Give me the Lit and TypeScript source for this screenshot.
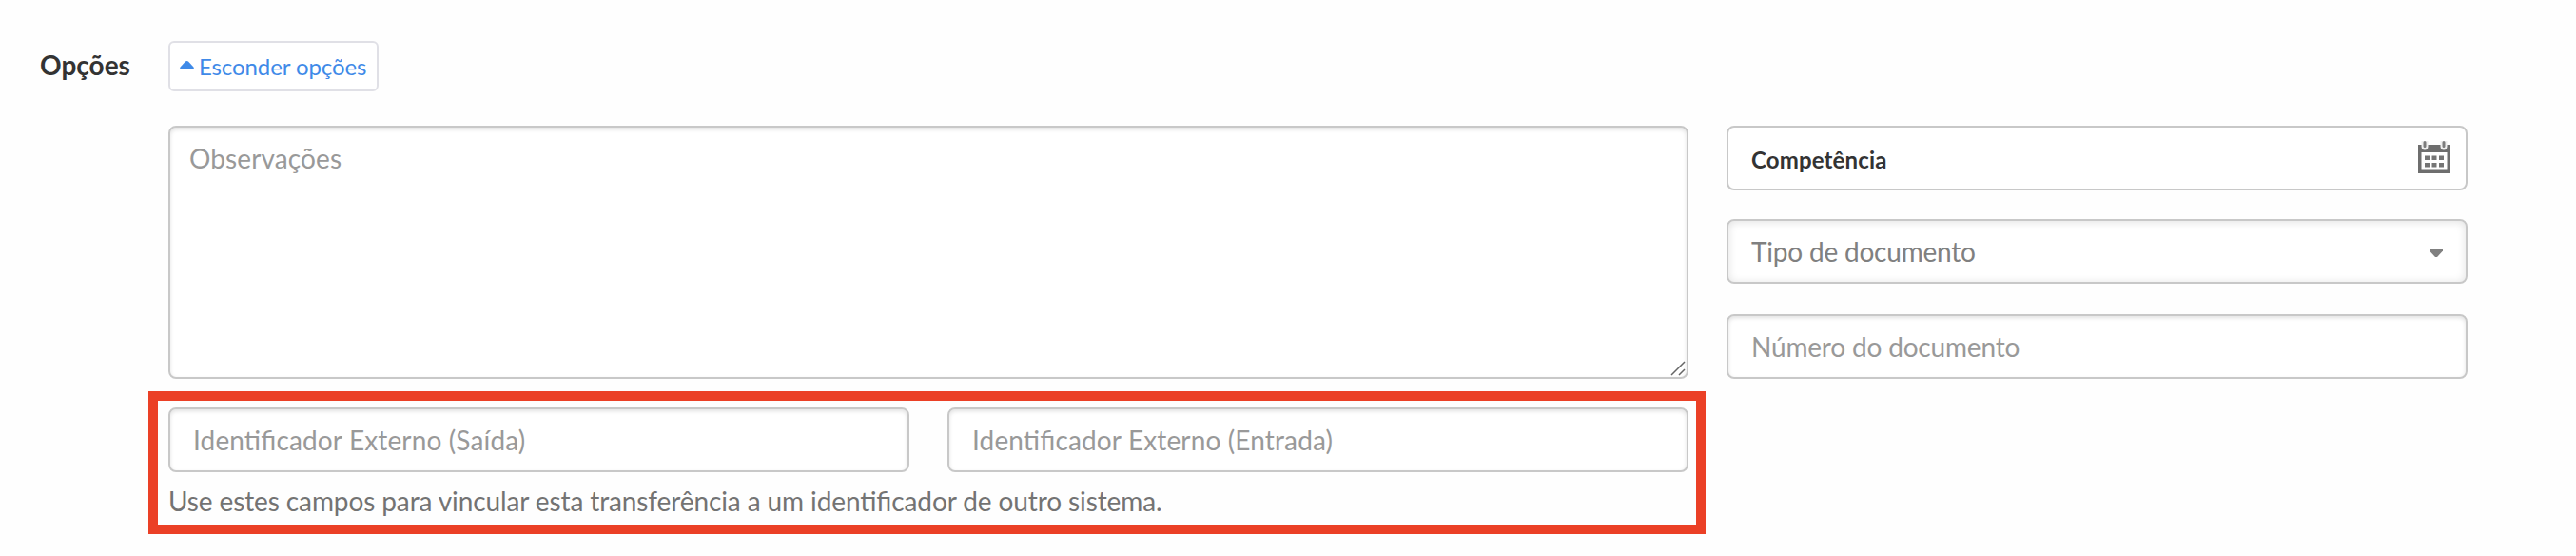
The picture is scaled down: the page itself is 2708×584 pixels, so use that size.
import { LitElement, html, css } from "lit";
import { customElement, property } from "lit/decorators.js";

@customElement("form-field")
export class FormField extends LitElement {
  @property()
  label: string = "";

  @property()
  kind: string = "text";

  renderIcon() {
    if (this.kind === "date") {
      return html`<svg class="calendar" width="34" height="34" viewBox="0 0 34 34">
        <path fill="#6e6e6e" d="M0 4h34v30H0z" />
        <path fill="#fff" d="M3.5 12h27v18.5h-27z" />
        <path fill="#eee" d="M3.5 0h7v5.5a3.5 4 0 0 1-7 0zM23.5 0h7v5.5a3.5 4 0 0 1-7 0z" />
        <path
          stroke="#7c7c7c"
          stroke-width="3"
          stroke-linecap="round"
          d="M7 1.5v4M27 1.5v4"
        />
        <path
          fill="#757575"
          d="M7 15.5h5V20H7zM14.5 15.5h5V20h-5zM22 15.5h5V20h-5zM7 23h5v4.5H7zM14.5 23h5v4.5h-5zM22 23h5v4.5h-5z"
        />
      </svg>`;
    }

    if (this.kind === "select") {
      return html`<svg class="caret" width="14" height="8" viewBox="0 0 14 8">
        <path fill="#808080" d="M0 0h14v1.5L8 8H6L0 1.5z" />
      </svg>`;
    }

    return null;
  }

  render() {
    return html`<div class="field ${this.kind}">
      <span>${this.label}</span>
      ${this.renderIcon()}
    </div>`;
  }

  static get styles() {
    return css`
      :host {
        display: block;
      }

      .field {
        align-items: center;
        background-color: #fff;
        border: 2px solid #c8c8c8;
        border-radius: 8px;
        box-shadow: inset 0 2px 4px rgba(0, 0, 0, 0.12);
        box-sizing: border-box;
        color: #999;
        display: flex;
        font-size: 28px;
        height: 68px;
        justify-content: space-between;
        line-height: 34px;
        padding: 0 24px;
      }

      .date {
        box-shadow: none;
        color: #333;
        font-size: 24px;
        font-weight: 700;
        letter-spacing: 0.15px;
        padding: 0 16px 2px 24px;
      }

      .date span {
        padding-top: 6px;
      }

      .select {
        box-shadow: inset 0 1px 10px rgba(0, 0, 0, 0.12);
        color: #808080;
        letter-spacing: -0.2px;
      }

      .caret {
        margin-top: 4px;
      }
    `;
  }
}

@customElement("app-root")
export class AppRoot extends LitElement {
  render() {
    return html`<section class="options">
      <div class="title">Opções</div>
      <div class="content">
        <button class="toggle">
          <svg width="15" height="9" viewBox="0 0 15 9">
            <path fill="#3f8ae8" d="M6 .6q1.5-1.2 3 0l5.5 6q1 2.4-1 2.4h-12q-2 0-1-2.4z" />
          </svg>
          <span>Esconder opções</span>
        </button>
        <div class="columns">
          <div class="main">
            <div class="notes">
              <span>Observações</span>
              <svg class="grip" width="16" height="16" viewBox="0 0 16 16">
                <path stroke="#666" stroke-width="1.5" d="M1 15L15 1M9 15L15 9" />
              </svg>
            </div>
            <div class="external">
              <div class="pair">
                <form-field label="Identificador Externo (Saída)"></form-field>
                <form-field label="Identificador Externo (Entrada)"></form-field>
              </div>
              <div class="hint">
                Use estes campos para vincular esta transferência a um identificador de
                outro sistema.
              </div>
              <div class="highlight"></div>
            </div>
          </div>
          <div class="side">
            <form-field kind="date" label="Competência"></form-field>
            <form-field kind="select" label="Tipo de documento"></form-field>
            <form-field class="number" label="Número do documento"></form-field>
          </div>
        </div>
      </div>
    </section>`;
  }

  static get styles() {
    return css`
      :host {
        background-color: #fefefe;
        display: block;
        font-family: Lato, "Liberation Sans", sans-serif;
        font-feature-settings: "liga" 1;
        height: 584px;
        overflow: hidden;
      }

      .options {
        display: grid;
        grid-template-columns: 135px 2417px;
        padding: 43px 0 0 42px;
      }

      .title {
        color: #333;
        font-size: 28px;
        font-weight: 700;
        line-height: 34px;
        padding-top: 8px;
      }

      .toggle {
        align-items: center;
        background-color: #fff;
        border: 2px solid #e0e0e6;
        border-radius: 6px;
        box-sizing: border-box;
        color: #3f8ae8;
        display: flex;
        font-family: inherit;
        font-size: 24px;
        gap: 5px;
        height: 53px;
        letter-spacing: -0.1px;
        line-height: 30px;
        padding: 0 10px;
        width: 221px;
      }

      .toggle svg {
        flex: none;
        margin-top: -3px;
      }

      .toggle span {
        white-space: nowrap;
      }

      .columns {
        display: grid;
        gap: 40px;
        grid-template-columns: 1598px 779px;
        margin-top: 36px;
      }

      .notes {
        background-color: #fff;
        border: 2px solid #c8c8c8;
        border-radius: 8px;
        box-shadow: inset 0 2px 4px rgba(0, 0, 0, 0.12);
        box-sizing: border-box;
        color: #999;
        font-size: 28px;
        height: 266px;
        letter-spacing: 0.12px;
        line-height: 34px;
        padding: 15px 20px;
        position: relative;
      }

      .grip {
        bottom: 1px;
        position: absolute;
        right: 1px;
      }

      .external {
        margin-top: 30px;
        position: relative;
      }

      .pair {
        display: grid;
        gap: 40px;
        grid-template-columns: 1fr 1fr;
        letter-spacing: 0.14px;
      }

      .hint {
        color: #737373;
        font-size: 28px;
        letter-spacing: -0.11px;
        line-height: 34px;
        padding: 13px 0 16px;
      }

      .highlight {
        border: 10px solid #eb4026;
        bottom: -2px;
        left: -21px;
        position: absolute;
        right: -18px;
        top: -17px;
      }

      .side {
        display: flex;
        flex-direction: column;
        gap: 30px;
      }

      .number {
        letter-spacing: -0.18px;
        margin-top: 2px;
      }
    `;
  }
}
